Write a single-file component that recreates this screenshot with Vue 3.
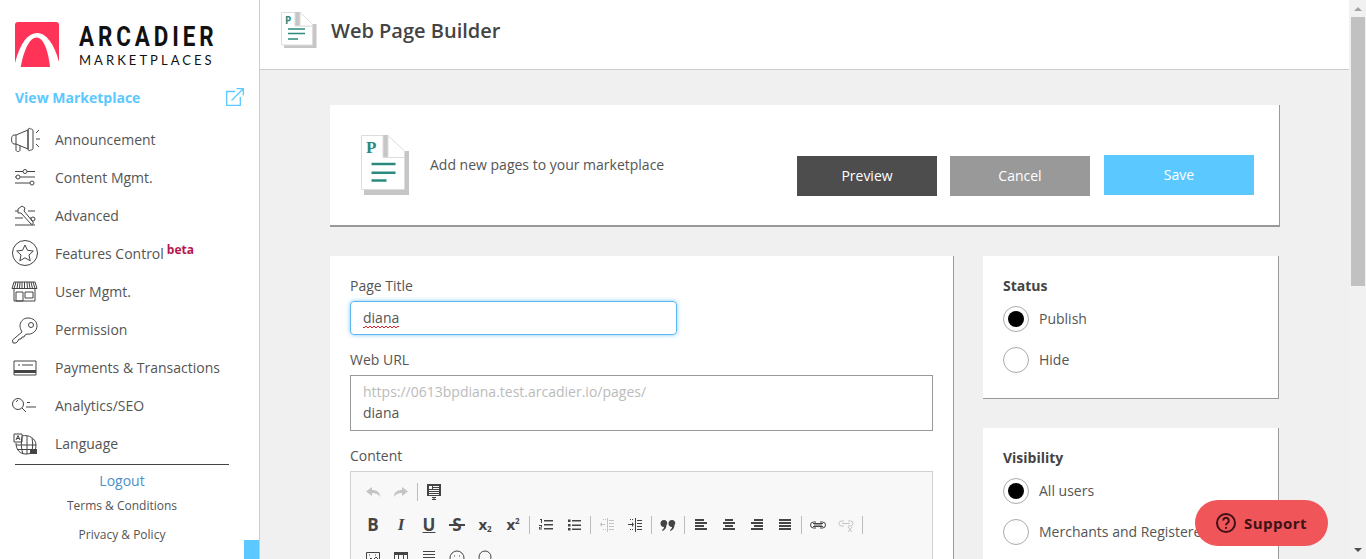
<template>
  <div class="page">
    <aside class="sidebar">
      <div class="logo">
        <svg class="logo-mark" viewBox="0 0 44 45" width="44" height="45">
          <path d="M3 0h38a3 3 0 0 1 3 3v42H0V3a3 3 0 0 1 3-3z" fill="#ff3358" />
          <path d="M0 41C5 21 13 11 22 11s17 10 22 29v5H0z" fill="#fff" />
          <path d="M5.700 45C9 27 15 15.500 21.500 15.500S33 27 35 45z" fill="#ff3358" />
        </svg>
        <div class="logo-text">
          <div class="logo-name">ARCADIER</div>
          <div class="logo-sub">MARKETPLACES</div>
        </div>
      </div>
      <div class="view-link">
        <span>View Marketplace</span>
        <svg viewBox="0 0 18 18" width="18" height="18" fill="none" stroke="#5bc8ff" stroke-width="1.3">
          <path d="M9 3.500H.7v13.800h13.600V9" />
          <path d="M5.500 12.500 17 1M10.500 .7h6.800v6.800" />
        </svg>
      </div>
      <nav class="menu">
        <a v-for="item in menu" :key="item.label" class="menu-item">
          <svg class="menu-icon" viewBox="0 0 30 30" width="30" height="30" fill="none" stroke="#444" stroke-width="1">
            <path v-for="(d, i) in item.paths" :key="i" :d="d" />
            <path v-if="item.solid" :d="item.solid" fill="#444" stroke="none" />
            <circle v-for="(c, i) in item.circles" :key="'c' + i" :cx="c[0]" :cy="c[1]" :r="c[2]" />
          </svg>
          <span>{{ item.label }}</span>
          <sup v-if="item.beta" class="beta">beta</sup>
        </a>
      </nav>
      <div class="side-foot">
        <div class="logout">Logout</div>
        <div class="foot-link">Terms &amp; Conditions</div>
        <div class="foot-link second">Privacy &amp; Policy</div>
      </div>
      <div class="side-tab"></div>
    </aside>

    <div class="main">
      <header class="topbar">
        <svg class="top-icon" viewBox="0 0 36 36" width="36" height="36">
          <path d="M31 12h4.500v24H3v-3h28zM14 0h5v14h-5z" fill="#c6c6c6" />
          <path d="M.5.500H14v13.500h17.500v19H.5z" fill="#fff" stroke="#ddd" />
          <path d="M19 .5 31.500 12v2H19z" fill="#fff" stroke="#ddd" />
          <text x="4" y="12" class="icon-p small">P</text>
          <path d="M7 17h17M7 21.500h17M7 27h10" stroke="#2b8a7d" stroke-width="1.500" />
        </svg>
        <h1>Web Page Builder</h1>
      </header>

      <div class="content">
        <section class="intro card">
          <svg class="intro-icon" viewBox="0 0 48 60" width="48" height="60">
            <path d="M43 16h5v44H3v-6h40zM22 0h5v23h-5z" fill="#c6c6c6" />
            <path d="M.5.500H22v22h21.500v32H.5z" fill="#fff" stroke="#ddd" />
            <path d="M27 .5 43.500 16v6.500H27z" fill="#fff" stroke="#ddd" />
            <text x="5" y="18" class="icon-p">P</text>
            <path d="M10.500 29h24M10.500 37.800h24M10.500 45.500h15" stroke="#2b8a7d" stroke-width="2.600" />
          </svg>
          <p class="intro-text">Add new pages to your marketplace</p>
          <div class="actions">
            <button class="btn preview">Preview</button>
            <button class="btn cancel">Cancel</button>
            <button class="btn save">Save</button>
          </div>
        </section>

        <div class="columns">
          <section class="form card">
            <label>Page Title</label>
            <div class="input focus"><span class="squiggle">diana</span></div>
            <label>Web URL</label>
            <div class="url-box">
              <div class="url-base">https://0613bpdiana.test.arcadier.io/pages/</div>
              <div>diana</div>
            </div>
            <label>Content</label>
            <div class="editor">
              <div v-for="(row, r) in toolbar" :key="r" class="tool-row">
                <template v-for="(t, i) in row" :key="i">
                  <span v-if="t === '|'" class="tool-sep"></span>
                  <span v-else class="tool" :class="{ off: t.off }">
                    <span v-if="t.text" class="tool-text" :class="t.cls">{{ t.text }}<small v-if="t.small">{{ t.small }}</small></span>
                    <svg v-else viewBox="0 0 16 16" width="16" height="16">
                      <path :d="t.d" :fill="t.stroke ? 'none' : 'currentColor'" :stroke="t.stroke ? 'currentColor' : 'none'" />
                    </svg>
                  </span>
                </template>
              </div>
            </div>
          </section>

          <div class="side-cards">
            <section class="card option-card">
              <h3>Status</h3>
              <div class="radio-row"><span class="radio on"></span>Publish</div>
              <div class="radio-row"><span class="radio"></span>Hide</div>
            </section>
            <section class="card option-card">
              <h3>Visibility</h3>
              <div class="radio-row"><span class="radio on"></span>All users</div>
              <div class="radio-row"><span class="radio"></span>Merchants and Registered Users</div>
            </section>
          </div>
        </div>
      </div>
    </div>

    <div class="scrollbar">
      <span class="arrow up"></span>
      <span class="thumb"></span>
      <span class="arrow down"></span>
    </div>

    <div class="support">
      <svg viewBox="0 0 20 20" width="20" height="20" fill="none" stroke="#3c1216" stroke-width="2">
        <circle cx="10" cy="10" r="9" />
        <path d="M7.200 7.600a2.800 2.800 0 1 1 4.300 2.400c-1 .6-1.500 1-1.500 2.200" />
        <path d="M10 14v1.800" />
      </svg>
      <span>Support</span>
    </div>
  </div>
</template>

<script setup>
const menu = [
  {
    label: 'Announcement',
    paths: [
      'M5 11l12-5v19l-12-5H3c-1.500 0-2.500-2-2.500-4.500S1.500 11 3 11zM5 11v9',
      'M17 6c0-2 2-2 2.500-1h1c1 0 1.500 1 1.500 2v17c0 1-.5 2-1.500 2h-1c-.5 1-2.500 1-2.500-1z',
      'M5 20v6c0 2 4 2 4 0v-4M25 9l3-3M25 15h4M25 20l3 3',
    ],
  },
  {
    label: 'Content Mgmt.',
    paths: ['M4 9.500h8M16 9.500h8M4 15h1M9 15h15M4 21h15'],
    circles: [[14, 9.500, 2], [7, 15, 2], [21, 21, 2]],
  },
  {
    label: 'Advanced',
    paths: [
      'M4 25h20M4 18h8M4 11h3M17 11h7M19 18h1',
      'M7 9l4-3 3 2-1 3 9 11c1 2-1 3-2 2L10 13l-3 0z',
    ],
    circles: [[22, 19, 2]],
  },
  {
    label: 'Features Control',
    beta: true,
    paths: ['M14 7l2.500 5.300 5.800.7-4.300 4 1.200 5.800-5.200-3-5.200 3 1.200-5.800-4.300-4 5.800-.7z'],
    circles: [[14, 15, 12.500]],
  },
  {
    label: 'User Mgmt.',
    paths: [
      'M3 6h21l2 6.500H1zM5 6l-2 6.500M7 6l-1 6.500M9 6l-.5 6.500M11 6v6.500M13.500 6v6.500M16 6l.5 6.500M18 6l1 6.500M20 6l1.500 6.500M22 6l2 6.500',
      'M3 13v12h21V13M5 16h7v9H5zM14 16h8v6h-8z',
    ],
  },
  {
    label: 'Permission',
    paths: ['M11 18 1.500 26l.5 3h3l2-2 1-2h2l1-2h2l1-2 2-1c5 1 10-3 10-8s-4-8-9-8-8 4-8 8c0 2 1 4 1 4z'],
    circles: [[20, 11, 2.500]],
  },
  {
    label: 'Payments & Transactions',
    paths: ['M3 9h22v14H3zM7 13h2M11 13h11'],
    solid: 'M3 18h22v3H3z',
  },
  {
    label: 'Analytics/SEO',
    paths: ['M11 18l4 4M16 12.500h3M15 17h10M5 12l2-2'],
    circles: [[7, 14, 5.500]],
  },
  {
    label: 'Language',
    paths: [
      'M3 6h8v8H3zM5 12l2-4.500L9 12M5.700 10.500h2.600',
      'M11 8c7-2 14 3 14 9s-4 9-10 9-10-4-10-11M5 17h20M6 21.500h19M8 13h0M11 9c-1 5-1 12 1 17M16 8v18M21 10c1 5 1 11-1 16',
    ],
    solid: 'M19 21h7v5h-7z',
  },
]

const sep = '|'
const bars = (rows) => rows.map(([x, y, w]) => `M${x} ${y}h${w}v2h-${w}z`).join('')

const toolbar = [
  [
    { off: true, d: 'M7 3v3c5 0 8 2 8 7-2-3-4-4-8-4v3L1 7.500z' },
    { off: true, d: 'M9 3v3C4 6 1 8 1 13c2-3 4-4 8-4v3l6-4.500z' },
    sep,
    { d: 'M1 0h14v12H1zM3 2v3h3V2zM7 2v1h6V2zM7 4v1h6V4zM3 6v1h10V6zM3 8v1h10V8zM3 10v1h10v-1zM6 13h4v1H8.500v1H10v1H6v-1h1.500v-1H6z' },
  ],
  [
    { text: 'B', cls: 'bold' },
    { text: 'I', cls: 'italic' },
    { text: 'U', cls: 'under' },
    { text: 'S', cls: 'strike' },
    { text: 'x', small: '2', cls: 'subs' },
    { text: 'x', small: '2', cls: 'sups' },
    sep,
    { d: 'M6 3h9v1.500H6zM6 7h9v1.500H6zM6 11h9v1.500H6zM2 2h2v4H3V3H2zM1 8h3v2.500H2v1h2v1H1V10h2V9H1z' },
    { d: 'M6 3h9v1.500H6zM6 7.500h9V9H6zM6 11.500h9V13H6zM2 2.500h2.500V5H2zM2 7h2.500v2.500H2zM2 11h2.500v2.500H2z' },
    sep,
    { off: true, d: 'M8 1h1v14H8zM10 3h5v1h-5zM10 6h5v1h-5zM10 9h5v1h-5zM10 12h5v1h-5zM1 7h5v1H1zM3 5v5L1 7.500zM4 2h1v1H4zM6 2h1v1H6zM4 12h1v1H4zM6 12h1v1H6z' },
    { d: 'M8 1h1v14H8zM10 3h5v1h-5zM10 6h5v1h-5zM10 9h5v1h-5zM10 12h5v1h-5zM1 7h4v1H1zM5 5l2 2.500L5 10zM3 2h1v1H3zM5 2h1v1H5zM3 12h1v1H3zM5 12h1v1H5z' },
    sep,
    { d: 'M4 3a3 3 0 0 1 2.500 5c0 3-1.500 5-4 6l-.5-1c1.500-1 2-2 2-3a3 3 0 0 1 0-7zM12 3a3 3 0 0 1 2.500 5c0 3-1.500 5-4 6l-.5-1c1.500-1 2-2 2-3a3 3 0 0 1 0-7z' },
    sep,
    { d: bars([[2, 2, 9], [2, 5, 12], [2, 8, 9], [2, 11, 12]]) },
    { d: bars([[4, 2, 8], [2, 5, 12], [4, 8, 8], [2, 11, 12]]) },
    { d: bars([[5, 2, 9], [2, 5, 12], [5, 8, 9], [2, 11, 12]]) },
    { d: bars([[2, 2, 12], [2, 5, 12], [2, 8, 12], [2, 11, 12]]) },
    sep,
    { stroke: true, d: 'M6 5H3.500a3 3 0 0 0 0 6H6M10 5h2.500a3 3 0 0 1 0 6H10M4 8h8M3 6.500h10M3 9.500h10' },
    { off: true, stroke: true, d: 'M6 4H3.500a2.500 2.500 0 0 0 0 5H6M10 4h2.500a2.500 2.500 0 0 1 0 5H10M4 6.500h8M10 10l4 5M14 10l-4 5' },
    sep,
  ],
  [
    { stroke: true, d: 'M1.500 2.500h13v11h-13zM4 5h1M10 5h1M3 11l3-3 2 2 3-3 3 3' },
    { d: 'M1 2h14v3H1zM1 5h1v9H1zM15 5h-1v9h1zM1 13h14v1H1zM5 5h1v9H5zM10 5h1v9h-1z' },
    { d: 'M2 1h12v1H2zM2 4h12v1H2zM2 7h12v1H2zM1 10h14v3H1z' },
    { stroke: true, d: 'M15 8A7 7 0 1 1 1 8a7 7 0 0 1 14 0zM5 6h1M10 6h1M5 10.500c1.500 1.500 4.500 1.500 6 0' },
    { stroke: true, d: 'M2 14h4v-2C3.500 11 2 9.500 2 7a6 6 0 0 1 12 0c0 2.500-1.500 4-4 5v2h4' },
  ],
]
</script>

<style>
html,
body {
  margin: 0;
  overflow: hidden;
}
</style>

<style scoped>
.page {
  display: flex;
  height: 100vh;
  overflow: hidden;
  background: #f0f0f0;
  font-family: "Open Sans", sans-serif;
  font-size: 14px;
  color: #555;
  position: relative;
}

/* sidebar */
.sidebar {
  width: 259px;
  flex: none;
  background: #fff;
  border-right: 1px solid #ccc;
  position: relative;
  overflow: hidden;
}

.logo {
  display: flex;
  gap: 20px;
  padding: 22px 0 0 15px;
  height: 48px;
}

.logo-mark {
  flex: none;
}

.logo-text {
  color: #111;
  line-height: 1;
}

.logo-name {
  font-family: "Roboto", sans-serif;
  font-weight: 700;
  font-size: 28px;
  letter-spacing: 4.900px;
  height: 32px;
  line-height: 30px;
  white-space: nowrap;
  transform: scaleX(0.8);
  transform-origin: left center;
}

.logo-sub {
  font-family: "Lato", sans-serif;
  font-size: 13px;
  letter-spacing: 3.05px;
  line-height: 12px;
}

.view-link {
  display: flex;
  justify-content: space-between;
  align-items: center;
  padding: 0 15px;
  margin-top: 17px;
  height: 20px;
  color: #5bc8ff;
  font-weight: 700;
}

.menu {
  margin-top: 13px;
}

.menu-item {
  display: flex;
  align-items: center;
  height: 38px;
  padding-left: 11px;
  color: #555;
}

.menu-icon {
  flex: none;
  margin-right: 14px;
}

.beta {
  color: #b5174e;
  font-size: 12px;
  font-weight: 700;
  line-height: 1;
  align-self: flex-start;
  margin: 10px 0 0 3px;
}

.side-foot {
  margin: 2px 30px 0 15px;
  border-top: 1px solid #444;
  text-align: center;
  font-size: 12px;
  color: #555;
}

.logout {
  color: #4a90c8;
  font-size: 14px;
  line-height: 20px;
  margin-top: 6px;
}

.foot-link {
  line-height: 17px;
  margin-top: 6px;
}

.foot-link.second {
  margin-top: 12px;
}

.side-tab {
  position: absolute;
  right: 0;
  bottom: 0;
  width: 15px;
  height: 19px;
  background: #5bc8ff;
}

/* main column */
.main {
  flex: 1;
  min-width: 0;
}

.topbar {
  display: flex;
  align-items: flex-start;
  height: 57px;
  background: #fff;
  border-bottom: 1px solid #ccc;
  padding: 12px 0 0 21px;
}

.top-icon {
  margin-right: 14px;
  flex: none;
}

.topbar h1 {
  margin: 5px 0 0;
  font-size: 20px;
  font-weight: 600;
  color: #444;
}

.icon-p {
  font-family: "Liberation Serif", serif;
  font-weight: 700;
  font-size: 17px;
  fill: #2b8a7d;
}

.icon-p.small {
  font-family: "Open Sans", sans-serif;
  font-size: 10px;
}

.content {
  padding: 35px 0 0 70px;
  width: 950px;
}

.card {
  background: #fff;
  border-right: 1px solid #999;
  border-bottom: 1px solid #999;
}

.intro {
  height: 120px;
  display: flex;
  padding-left: 31px;
  border-bottom-width: 2px;
}

.intro-icon {
  flex: none;
  margin-top: 30px;
}

.intro-text {
  margin: 50px 0 0 21px;
  line-height: 20px;
  color: #555;
}

.actions {
  margin-left: auto;
  margin-right: 25px;
  display: flex;
  gap: 13px;
  padding-top: 51px;
}

.btn {
  width: 140px;
  height: 40px;
  border: 0;
  color: #fff;
  font-family: inherit;
  font-size: 14px;
  padding: 0 0 2px;
  flex: none;
}

.preview {
  background: #4d4d4d;
}

.cancel {
  background: #999;
}

.save {
  width: 150px;
  background: #5bc8ff;
  margin: -1px 0 0 1px;
}

.columns {
  display: flex;
  gap: 29px;
  margin-top: 29px;
}

.form {
  width: 583px;
  height: 400px;
  flex: none;
  padding: 20px 20px 0;
  border-bottom: 0;
}

.form label {
  display: block;
  line-height: 20px;
}

.input {
  height: 32px;
  margin-top: 5px;
  border: 1px solid #5bb8f0;
  border-radius: 4px;
  box-shadow: 0 0 4px #7cc8f5;
  line-height: 32px;
  padding-left: 12px;
  width: 313px;
  margin-bottom: 15px;
}

.squiggle {
  position: relative;
  display: inline-block;
}

/* spell check underline */
.squiggle::after {
  content: "";
  position: absolute;
  left: 0;
  right: 0;
  bottom: 6px;
  height: 2px;
  background:
    linear-gradient(135deg, transparent 40%, #e0202a 40% 60%, transparent 60%) 0 0 / 4px 2px repeat-x,
    linear-gradient(45deg, transparent 40%, #e0202a 40% 60%, transparent 60%) 2px 0 / 4px 2px repeat-x;
}

.url-box {
  margin-top: 5px;
  height: 49px;
  border: 1px solid #999;
  padding: 5px 12px 0;
  line-height: 21px;
  margin-bottom: 15px;
}

.url-base {
  color: #bbb;
}

.editor {
  margin-top: 5px;
  border: 1px solid #d1d1d1;
  background: #f8f8f8;
  height: 200px;
  padding: 3px 8px 0;
}

.tool-row {
  display: flex;
  align-items: center;
  height: 33px;
  color: #444;
}

.tool {
  width: 28px;
  height: 28px;
  display: flex;
  align-items: center;
  justify-content: center;
  flex: none;
}

.tool.off {
  color: #c4c4c4;
}

.tool-sep {
  width: 1px;
  height: 18px;
  background: #bcbcbc;
  margin: 0 2px;
  flex: none;
}

.tool-text {
  font-family: "Open Sans", sans-serif;
  font-weight: 700;
  font-size: 17px;
  line-height: 1;
  position: relative;
}

.tool-text.italic {
  font-family: "Liberation Serif", serif;
  font-style: italic;
}

.tool-text.under {
  text-decoration: underline;
}

.tool-text.strike::after {
  content: "";
  position: absolute;
  left: -3px;
  right: -3px;
  top: 8px;
  height: 2px;
  background: currentColor;
}

.tool-text.subs,
.tool-text.sups {
  font-size: 15px;
}

.tool-text small {
  font-size: 8px;
}

.subs small {
  vertical-align: -2px;
}

.sups small {
  vertical-align: 6px;
}

.side-cards {
  width: 296px;
  flex: none;
  display: flex;
  flex-direction: column;
  gap: 29px;
}

.option-card {
  padding: 20px 20px 0;
  height: 122px;
}

.option-card h3 {
  margin: 0 0 2px;
  font-size: 14px;
  font-weight: 700;
  line-height: 20px;
  color: #444;
}

.radio-row {
  display: flex;
  align-items: center;
  height: 41px;
  white-space: nowrap;
}

.radio {
  width: 24px;
  height: 24px;
  border: 1px solid #aaa;
  border-radius: 50%;
  margin-right: 10px;
  flex: none;
  position: relative;
  background: #fff;
}

.radio.on::after {
  content: "";
  position: absolute;
  inset: 4px;
  border-radius: 50%;
  background: #000;
}

/* fake window scrollbar */
.scrollbar {
  width: 17px;
  flex: none;
  background: #f1f1f1;
  display: flex;
  flex-direction: column;
  align-items: center;
  box-sizing: border-box;
  position: relative;
}

.arrow {
  width: 0;
  height: 0;
  border: 4px solid transparent;
  position: absolute;
}

.arrow.up {
  border-bottom: 4px solid #a3a3a3;
  top: 3px;
}

.arrow.down {
  border-top: 4px solid #505050;
  bottom: 3px;
}

.thumb {
  position: absolute;
  top: 17px;
  width: 14px;
  height: 269px;
  background: #c1c1c1;
}

.support {
  position: absolute;
  left: 1195px;
  top: 500px;
  width: 133px;
  height: 46px;
  border-radius: 23px;
  background: #f0555a;
  display: flex;
  align-items: center;
  justify-content: center;
  gap: 8px;
  color: #3c1216;
  font-weight: 700;
  font-size: 15px;
  letter-spacing: 0.5px;
}
</style>
